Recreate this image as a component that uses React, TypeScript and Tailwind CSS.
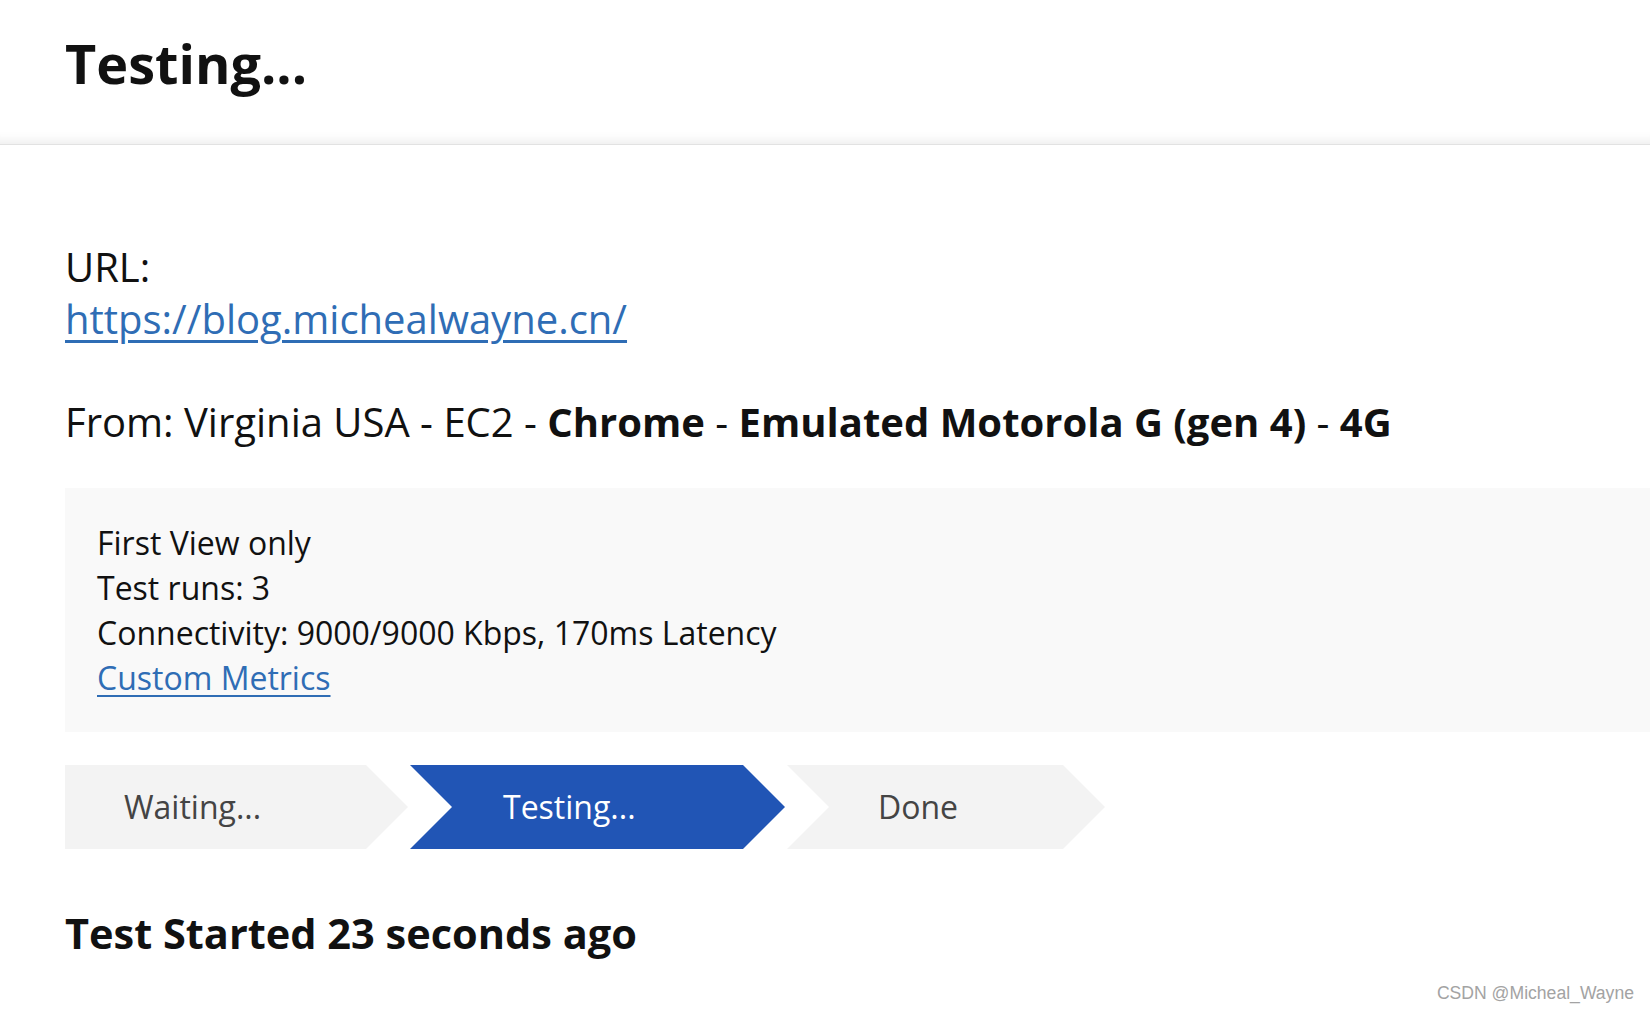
const steps = [
  { label: "Waiting...", active: false, first: true, width: "w-[343px]", pad: "pl-[59px]" },
  { label: "Testing...", active: true, first: false, width: "w-[375px]", pad: "pl-[93px]" },
  { label: "Done", active: false, first: false, width: "w-[318px]", pad: "pl-[91px]" },
]

export default function App() {
  return (
    <div className="relative min-h-[1012px] bg-white font-['Open_Sans',sans-serif] text-[#111]">
      {/* Page header */}
      <header className="h-[145px] border-b border-[#e2e2e2] pl-[65px] pt-[30px] shadow-[inset_0_-14px_12px_-12px_rgba(0,0,0,0.09)]">
        <h1 className="text-[54px] font-bold leading-[66px]">Testing...</h1>
      </header>

      <main className="pl-[65px] pt-[96px]">
        <div className="text-[40px] leading-[52px]">
          URL:
          <br />
          <a href="#" className="text-[#2f6db5] underline decoration-[3px] underline-offset-[6px]">
            https://blog.michealwayne.cn/
          </a>
        </div>

        <p className="mt-[51px] text-[40px] leading-[52px]">
          From: Virginia USA - EC2 - <b>Chrome</b> - <b>Emulated Motorola G (gen 4)</b> - <b>4G</b>
        </p>

        {/* Test settings */}
        <div className="mt-[40px] bg-[#f9f9f9] px-[32px] py-[32px] text-[32px] leading-[45px]">
          <div>First View only</div>
          <div>Test runs: 3</div>
          <div>Connectivity: 9000/9000 Kbps, 170ms Latency</div>
          <a href="#" className="text-[#2f6db5] underline decoration-2 underline-offset-[5px]">
            Custom Metrics
          </a>
        </div>

        {/* Progress steps */}
        <div className="mt-[33px] flex gap-[2px]">
          {steps.map((s) => (
            <div
              key={s.label}
              className={[
                "flex h-[84px] items-center text-[32px]",
                s.width,
                s.pad,
                s.active ? "bg-[#2155b5] text-white" : "bg-[#f3f3f3] text-[#444]",
                s.first
                  ? "[clip-path:polygon(0_0,calc(100%-42px)_0,100%_50%,calc(100%-42px)_100%,0_100%)]"
                  : "[clip-path:polygon(0_0,calc(100%-42px)_0,100%_50%,calc(100%-42px)_100%,0_100%,42px_50%)]",
              ].join(" ")}
            >
              {s.label}
            </div>
          ))}
        </div>

        <h3 className="mt-[59px] text-[41.5px] font-bold leading-[50px]">Test Started 23 seconds ago</h3>
      </main>

      <div className="absolute bottom-[6px] right-[16px] font-['Liberation_Sans',Arial,sans-serif] text-[17.6px] text-[#a3a3a3]">
        CSDN @Micheal_Wayne
      </div>
    </div>
  )
}
